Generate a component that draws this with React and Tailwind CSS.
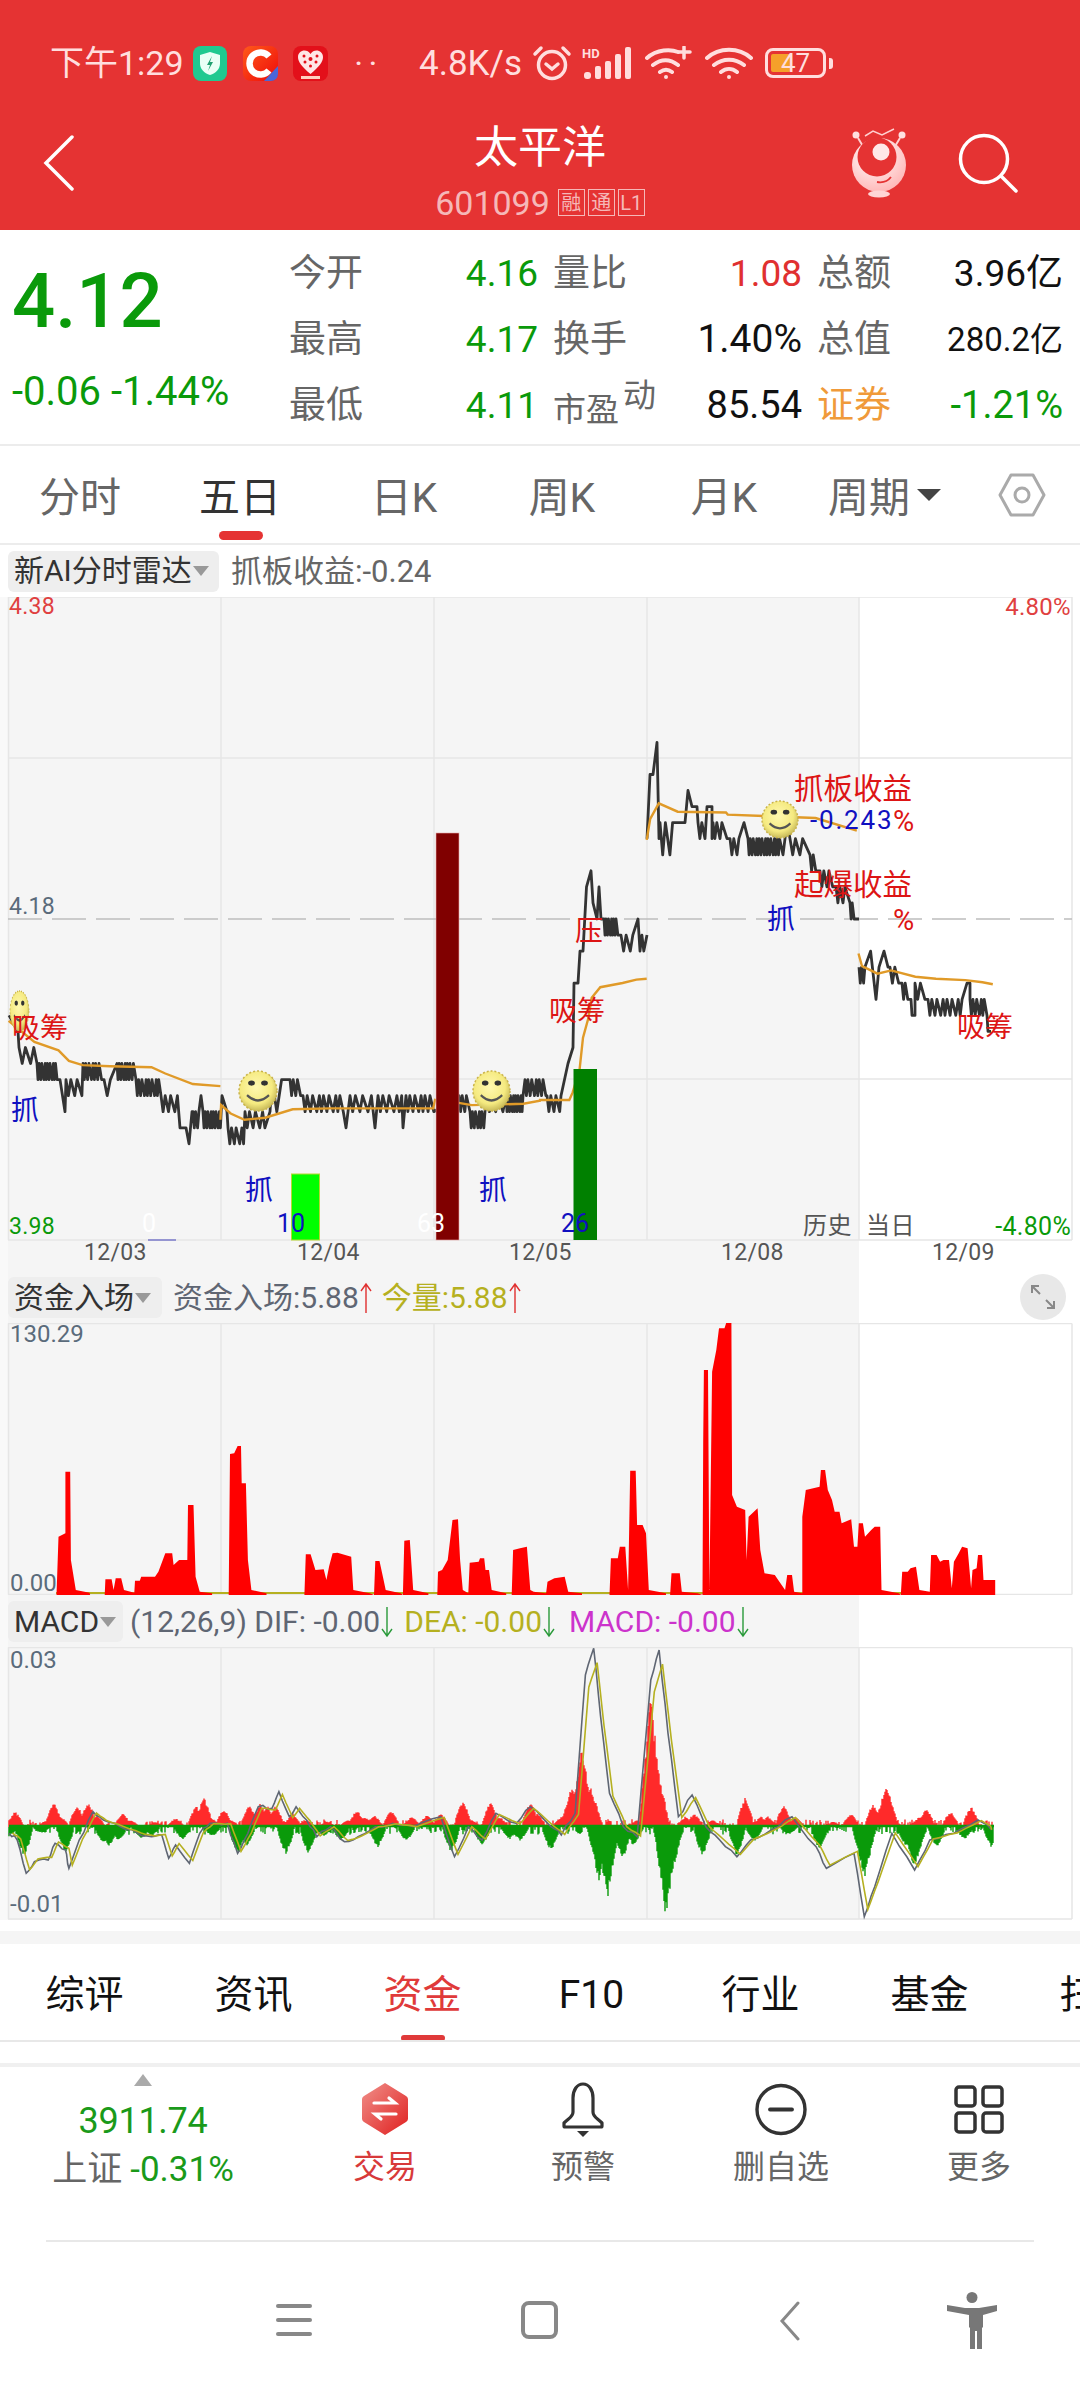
import React from "react";

const Y = (p) => 919 - (p - 4.18) * 1606;
const STEPS = [0.8, 0.8, 1.3, 0.8, 1.6, 1];
function zig(x0, x1, a, b, step) {
  const out = [];
  let x = x0, i = 0;
  while (x <= x1) {
    out.push([x, Y(i % 2 ? b : a)]);
    x += step * STEPS[i % 6];
    i++;
  }
  return out;
}
const pt = (x, p) => [[x, Y(p)]];
const join = (...a) => a.flat().map((q) => q.map((n) => n.toFixed(1)).join(",")).join(" ");

const day123 = join(
  pt(9, 4.12), pt(18, 4.11), zig(19, 36, 4.1, 4.09, 4), zig(37, 58, 4.09, 4.08, 1.3), pt(60, 4.08), pt(65, 4.06),
  zig(66, 82, 4.08, 4.07, 3), zig(83, 103, 4.09, 4.08, 1.6), zig(104, 115, 4.08, 4.07, 4), zig(117, 134, 4.09, 4.08, 1.3),
  zig(136, 160, 4.08, 4.07, 1.6), zig(161, 178, 4.07, 4.06, 2.6), pt(180, 4.05), pt(186, 4.05), pt(189, 4.04), pt(192, 4.06),
  zig(193, 200, 4.06, 4.05, 1.6), pt(201, 4.07), zig(203, 221, 4.06, 4.05, 1.3), pt(222, 4.07), pt(227, 4.06),
  zig(228, 244, 4.05, 4.04, 2.2), zig(245, 266, 4.06, 4.05, 2.8), pt(270, 4.06), zig(272, 288, 4.08, 4.06, 6), zig(290, 302, 4.08, 4.07, 2),
  zig(303, 345, 4.07, 4.06, 2.6), pt(346, 4.05), zig(350, 374, 4.07, 4.06, 3.4), pt(375, 4.05), zig(378, 402, 4.07, 4.06, 3), pt(403, 4.05),
  zig(406, 434, 4.07, 4.06, 2.4), zig(459, 468, 4.07, 4.06, 2), zig(470, 486, 4.06, 4.05, 1.5), zig(487, 505, 4.07, 4.06, 3), zig(506, 524, 4.07, 4.06, 1.2),
  zig(525, 547, 4.08, 4.07, 1.8), zig(547, 561, 4.07, 4.06, 2.4), pt(561, 4.07), pt(568, 4.09), pt(573, 4.1), pt(574, 4.14), pt(578, 4.14), pt(580, 4.16), pt(583, 4.16),
  pt(586.5, 4.2), pt(591, 4.21), pt(593, 4.19), pt(597, 4.18), pt(599, 4.2), pt(601, 4.18), zig(604, 619, 4.18, 4.17, 1.2), zig(621, 636, 4.17, 4.16, 3.2), pt(638, 4.18), zig(640, 647, 4.16, 4.17, 2.4)
);
const day4 = join(
  pt(647, 4.23), pt(650, 4.27), pt(653, 4.27), pt(657, 4.29), pt(659, 4.23), zig(660, 678, 4.24, 4.22, 3.4), pt(680, 4.24), pt(685, 4.24), pt(688, 4.26), pt(692, 4.25), pt(697, 4.25),
  zig(698, 706, 4.24, 4.23, 2.4), pt(707, 4.25), pt(712, 4.25), pt(712, 4.23), zig(713, 724, 4.24, 4.23, 2.4), pt(727, 4.23), zig(730, 740, 4.23, 4.22, 2.4), pt(744, 4.24),
  zig(748, 780, 4.23, 4.22, 1.4), pt(783, 4.22), pt(787, 4.24), pt(790, 4.23), zig(790, 808, 4.23, 4.22, 3.4), zig(810, 816, 4.22, 4.21, 2), zig(820, 833, 4.21, 4.2, 2.4), zig(836, 846, 4.2, 4.19, 2.4),
  zig(850, 855, 4.19, 4.18, 1.4), pt(859, 4.18)
);
const day5 = join(
  zig(859, 866, 4.15, 4.14, 1.6), pt(870.6, 4.16), pt(876, 4.13), pt(879, 4.15), pt(884, 4.16), pt(888, 4.15), zig(890, 900, 4.15, 4.14, 3), zig(902, 908, 4.14, 4.13, 2),
  pt(911, 4.13), pt(912, 4.12), pt(915, 4.12), zig(915, 925, 4.14, 4.13, 3.4), zig(928, 964, 4.13, 4.12, 2.4), pt(967, 4.14), pt(970, 4.14), zig(970, 985, 4.13, 4.12, 1.8), pt(987, 4.12), pt(988, 4.11), pt(991, 4.11)
);

const L = (a) => a.map(([x, y]) => `${(x / 2.904).toFixed(1)},${(600 + y / 2.376).toFixed(1)}`).join(" ");
const R = (a) => a.map(([x, y]) => `${(540 + x / 2.904).toFixed(1)},${(600 + y / 2.376).toFixed(1)}`).join(" ");
const avg = [
  L([[25, 1000], [100, 1050], [170, 1070], [200, 1095], [240, 1105], [320, 1108], [440, 1110], [480, 1125], [560, 1150], [640, 1155]]),
  L([[640, 1235], [642, 1200], [670, 1220], [710, 1235], [770, 1230], [850, 1210], [960, 1208], [1258, 1208], [1264, 1185]]),
  L([[1332, 1195], [1370, 1200], [1520, 1197], [1568, 1190]]) + " " + R([[0, 1188], [85, 1188], [95, 1170], [115, 1115], [125, 1040], [140, 995], [150, 945], [175, 920], [240, 910], [280, 902], [310, 900]]),
  R([[310, 570], [320, 520], [345, 483], [400, 503], [540, 505], [545, 510], [800, 518], [920, 548]]),
  R([[925, 840], [935, 870], [980, 888], [1020, 880], [1090, 895], [1150, 900], [1235, 903], [1285, 908], [1315, 913]]),
];

const fundPts = [[82,1005],[85,830],[95,820],[95,635],[102,635],[103,900],[110,990],[130,998],[131,1005],[152,1005],[153,958],[162,958],[165,990],[168,955],[176,955],[180,990],[195,998],[196,962],[203,962],[205,950],[225,950],[230,935],[240,880],[250,880],[252,915],[260,900],[272,900],[273,735],[281,735],[284,950],[290,995],[308,1000],[308,1005],[332,1005],[334,582],[340,580],[345,558],[350,558],[351,670],[357,670],[360,900],[365,990],[387,1000],[387,1005],[442,1005],[444,883],[451,883],[458,930],[470,928],[474,960],[478,918],[483,880],[490,878],[510,890],[513,990],[537,1000],[543,1005],[545,903],[551,903],[557,960],[560,990],[582,1000],[585,1005],[587,842],[595,840],[600,990],[622,1000],[622,1005],[635,1005],[636,935],[642,930],[650,900],[657,780],[665,778],[668,900],[672,990],[680,1000],[682,908],[695,905],[697,895],[703,895],[705,930],[710,930],[714,990],[735,1000],[735,1005],[743,1005],[745,870],[755,865],[765,860],[770,990],[775,995],[793,1000],[795,965],[805,955],[820,950],[825,995],[845,1000],[845,1005],[885,1005],[887,895],[897,895],[900,860],[908,860],[912,990],[915,632],[923,632],[925,795],[933,795],[938,820],[942,990],[967,1000],[967,1005],[973,1005],[975,940],[987,940],[990,995],[1013,1000],[1020,1005],[1021,545],[1022,330],[1028,330],[1030,990],[1034,335],[1040,270],[1044,205],[1052,205],[1055,185],[1062,185],[1063,705],[1070,740],[1082,750],[1084,900],[1087,770],[1100,745],[1104,870],[1110,940],[1125,945],[1130,960],[1140,990],[1143,945],[1150,945],[1153,995],[1165,1000],[1165,770],[1170,690],[1190,680],[1192,630],[1198,630],[1202,690],[1208,720],[1212,755],[1219,755],[1222,790],[1236,778],[1240,860],[1245,860],[1247,790],[1253,790],[1256,830],[1265,810],[1270,800],[1278,800],[1280,990],[1305,1000],[1308,1005],[1310,935],[1318,935],[1322,925],[1330,920],[1335,990],[1350,995],[1352,885],[1360,885],[1365,905],[1370,900],[1378,900],[1382,985],[1385,905],[1392,880],[1397,860],[1405,865],[1410,985],[1412,930],[1418,925],[1420,885],[1426,885],[1428,960],[1445,960],[1445,1005]];
const M = (x, y) => `${(x / 1.452).toFixed(1)},${(1260 + y / 3).toFixed(1)}`;
const fundPoly = fundPts.map(([x, y]) => M(x, y)).join(" ");

const redPk = [[22,635],[40,675],[68,660],[78,605],[88,650],[112,615],[128,605],[140,645],[178,640],[190,660],[225,665],[255,655],[285,615],[296,590],[305,650],[325,625],[335,660],[362,615],[378,610],[388,615],[400,615],[425,640],[445,660],[475,665],[505,660],[518,630],[530,650],[543,645],[568,632],[598,650],[620,645],[640,640],[672,600],[685,660],[712,605],[725,650],[770,605],[780,640],[815,650],[830,560],[845,435],[858,560],[862,640],[925,660],[945,265],[955,500],[960,640],[995,650],[1008,640],[1035,660],[1082,590],[1105,650],[1115,650],[1138,615],[1155,650],[1210,665],[1235,640],[1268,610],[1287,545],[1298,660],[1335,650],[1345,625],[1380,635],[1410,620]];
const greenPk = [[13,710],[35,770],[60,700],[95,760],[150,730],[158,745],[172,725],[205,720],[220,710],[265,720],[308,710],[345,765],[358,740],[415,765],[448,765],[470,710],[495,725],[548,745],[590,725],[655,760],[700,740],[740,720],[755,725],[800,755],[870,850],[882,900],[904,780],[920,740],[967,958],[975,830],[1020,770],[1070,770],[1095,725],[1145,705],[1190,750],[1255,840],[1315,740],[1328,810],[1360,745],[1400,720],[1440,745]];
const noise = (x) => { const s = Math.sin(x * 12.9898) * 43758.5453; return s - Math.floor(s); };
function hist(pk, sign) {
  let d = "";
  for (let X = 13; X <= 1443; X += 1.452) {
    let h = noise(X + sign) > 0.45 ? noise(X * 3) * 24 : 0;
    for (const [px, py] of pk) {
      const ph = Math.abs(py - 682);
      const big = ph > 120;
      const w = big ? 18 : 12;
      const t = 1 - Math.abs(X - px) / w;
      if (t > 0) h = Math.max(h, ph * Math.pow(t, big ? 1 : 0.6));
    }
    h *= 0.82 + 0.18 * noise(X);
    if (h > 0.5) d += `M${(X / 1.452).toFixed(1)} 1827V${(1827 + (sign * h) / 3).toFixed(1)}`;
  }
  return d;
}
const dif = [[13,700],[25,720],[38,820],[50,785],[70,780],[80,730],[95,750],[100,805],[115,720],[135,635],[150,660],[175,680],[200,700],[220,710],[235,705],[245,775],[255,735],[275,790],[290,700],[305,670],[330,670],[345,760],[360,700],[375,620],[395,625],[405,575],[420,650],[430,620],[445,660],[460,710],[480,680],[500,725],[520,710],[545,680],[570,670],[600,680],[640,650],[660,770],[680,680],[700,720],[720,640],[750,670],[770,620],[800,680],[815,705],[835,640],[850,225],[862,145],[872,350],[885,580],[905,680],[925,710],[945,240],[957,150],[970,400],[985,650],[1005,585],[1025,680],[1045,720],[1070,770],[1090,720],[1120,690],[1150,650],[1185,740],[1200,805],[1240,760],[1255,950],[1270,860],[1295,700],[1328,810],[1350,720],[1385,700],[1420,660],[1440,690]];
const MP = (x, y) => `${(x / 1.452).toFixed(1)},${(1600 + y / 3).toFixed(1)}`;
function rough(pts, amp) {
  const out = [];
  for (let i = 0; i < pts.length - 1; i++) {
    const [x0, y0] = pts[i], [x1, y1] = pts[i + 1];
    for (let k = 0; k < 3; k++) {
      const t = k / 3;
      const j = k === 0 ? 0 : (noise(x0 + k * 7) - 0.5) * amp;
      out.push([x0 + (x1 - x0) * t, y0 + (y1 - y0) * t + j]);
    }
  }
  out.push(pts[pts.length - 1]);
  return out;
}
const difLine = rough(dif, 12).map(([x, y]) => MP(x, y)).join(" ");
const deaLine = rough(dif, 4).map(([x, y]) => MP(Math.min(x + 5, 1440), 682 + (y - 682) * 0.92)).join(" ");

const greenT = "text-[#0a9a0a]";
const labelT = "text-[#666666]";

function Smiley({ x, y, w, h }) {
  const cx = x + w / 2, cy = y + h / 2;
  return (
    <g transform={`translate(${cx} ${cy}) scale(${w / 38} ${h / 38})`}>
      <circle r="19" fill="url(#smile)" stroke="#c9b24a" strokeWidth="1.5" strokeDasharray="2 2" />
      <ellipse cx="-6.5" cy="-7.5" rx="3.4" ry="2.4" fill="#333" />
      <ellipse cx="6.5" cy="-7.5" rx="3.4" ry="2.4" fill="#333" />
      <path d="M-11 4Q0 14 11 4" fill="none" stroke="#555" strokeWidth="2.2" />
    </g>
  );
}

function Grid({ top, bottom }) {
  return (
    <g stroke="#e6e6e6" strokeWidth="1.5">
      {[8.5, 221, 434, 647, 859, 1072].map((x) => (
        <line key={x} x1={x} x2={x} y1={top} y2={bottom} />
      ))}
      <line x1="8" x2="1072" y1={top} y2={top} />
      <line x1="8" x2="1072" y1={bottom} y2={bottom} />
    </g>
  );
}

function MainChart() {
  const t = "absolute whitespace-nowrap leading-none";
  const cn = `${t} text-[#dd1515]`;
  const blue = `${t} text-[28px] text-[#1010c0]`;
  const num = `${t} text-[25px]`;
  const ax = `${t} font-[Roboto] tracking-[0.3px]`;
  return (
    <div className="relative h-[663px] w-[1080px]">
      <svg className="block" width="1080" height="663" viewBox="0 597 1080 663">
        <defs>
          <radialGradient id="smile" cx="45%" cy="40%" r="60%">
            <stop offset="0%" stopColor="#fff8b0" />
            <stop offset="70%" stopColor="#f5ea80" />
            <stop offset="100%" stopColor="#c9bb5a" />
          </radialGradient>
        </defs>
        <Grid top={597} bottom={1240} />
        <g stroke="#e6e6e6" strokeWidth="1.5">
          <line x1="8" x2="1072" y1="758" y2="758" />
          <line x1="8" x2="1072" y1="1079" y2="1079" />
        </g>
        <line x1="8" x2="1072" y1="919" y2="919" stroke="#bdbdbd" strokeWidth="1.5" strokeDasharray="34 10" />
        <polyline points={day123} fill="none" stroke="#333333" strokeWidth="2.8" strokeLinejoin="round" />
        <polyline points={day4} fill="none" stroke="#333333" strokeWidth="2.8" strokeLinejoin="round" />
        <polyline points={day5} fill="none" stroke="#333333" strokeWidth="2.8" strokeLinejoin="round" />
        {avg.map((p, i) => (
          <polyline key={i} points={p} fill="none" stroke="#e09a28" strokeWidth="2.4" />
        ))}
        <rect x="436" y="833" width="23" height="407" fill="#800000" stroke="#e8a8a8" strokeWidth="0.6" />
        <rect x="291.5" y="1174" width="28" height="66" fill="#00ff00" stroke="#b8d830" strokeWidth="1" />
        <rect x="573.5" y="1069" width="23.5" height="171" fill="#008000" />
        <line x1="148" x2="176" y1="1240" y2="1240" stroke="#7878c8" strokeWidth="1.5" />
        <Smiley x={10} y={991} w={19} h={40} />
        <Smiley x={239} y={1071} w={38} h={40} />
        <Smiley x={473} y={1071} w={37} h={40} />
        <Smiley x={762} y={801} w={36} h={37} />
      </svg>
      <span className={`${ax} left-[9px] top-[-2px] text-[23px] text-[#e04040]`}>4.38</span>
      <span className={`${ax} right-[9px] top-[-2px] text-[24px] text-[#e04040]`}>4.80%</span>
      <span className={`${ax} left-[9px] top-[298px] text-[23px] text-[#5a6b7b]`}>4.18</span>
      <span className={`${ax} left-[9px] top-[618px] text-[23px] ${greenT}`}>3.98</span>
      <span className={`${ax} right-[9px] top-[617px] text-[25px] ${greenT}`}>-4.80%</span>
      <span className={`${cn} left-[12px] top-[418px] text-[28px]`}>吸筹</span>
      <span className={`${blue} left-[11px] top-[500px]`}>抓</span>
      <span className={`${blue} left-[245px] top-[580px]`}>抓</span>
      <span className={`${blue} left-[479px] top-[580px]`}>抓</span>
      <span className={`${num} left-[142px] top-[614px] text-white`}>0</span>
      <span className={`${num} left-[277px] top-[614px] text-[#1010c0]`}>10</span>
      <span className={`${num} left-[417px] top-[614px] text-white`}>63</span>
      <span className={`${num} left-[561px] top-[614px] text-[#1010c0]`}>26</span>
      <span className={`${cn} left-[575px] top-[321px] text-[28px]`}>压</span>
      <span className={`${cn} left-[549px] top-[401px] text-[28px]`}>吸筹</span>
      <span className={`${cn} left-[957px] top-[417px] text-[28px]`}>吸筹</span>
      <span className={`${cn} left-[794px] top-[178px] text-[29.5px]`}>抓板收益</span>
      <span className={`${t} left-[810px] top-[210px] text-[26px] tracking-[1.8px] text-[#1010c0]`}>-0.243</span>
      <span className={`${cn} left-[893px] top-[210px] font-[Roboto] text-[29px]`}>%</span>
      <span className={`${cn} left-[794px] top-[274px] text-[29.5px]`}>起爆收益</span>
      <span className={`${cn} left-[893px] top-[309px] font-[Roboto] text-[29px]`}>%</span>
      <span className={`${blue} left-[767px] top-[309px]`}>抓</span>
      <span className={`${t} left-[803px] top-[617px] text-[24px] tracking-[0.5px] text-[#555555]`}>历史</span>
      <span className={`${t} left-[866px] top-[617px] text-[24px] tracking-[0.5px] text-[#555555]`}>当日</span>
      <span className={`${ax} left-[84px] top-[644px] text-[23px] text-[#555555]`}>12/03</span>
      <span className={`${ax} left-[297px] top-[644px] text-[23px] text-[#555555]`}>12/04</span>
      <span className={`${ax} left-[509px] top-[644px] text-[23px] text-[#555555]`}>12/05</span>
      <span className={`${ax} left-[721px] top-[644px] text-[23px] text-[#555555]`}>12/08</span>
      <span className={`${ax} left-[932px] top-[644px] text-[23px] text-[#555555]`}>12/09</span>
    </div>
  );
}

const Caret = ({ c = "text-[#999999]" }) => (
  <svg className={`ml-[1px] ${c}`} width="16" height="12" viewBox="0 0 16 12"><path d="M0 1h16L8 11z" fill="currentColor" /></svg>
);
const ArrowUp = () => (
  <svg width="12" height="32" viewBox="0 0 12 32" className="mx-[1px] text-[#e03030]"><path d="M6 31V2M1 9l5-7 5 7" fill="none" stroke="currentColor" strokeWidth="1.4" /></svg>
);
const ArrowDown = () => (
  <svg width="12" height="32" viewBox="0 0 12 32" className="mx-[1px] text-[#2a9a3a]"><path d="M6 1v29M1 23l5 7 5-7" fill="none" stroke="currentColor" strokeWidth="1.4" /></svg>
);

function FundChart() {
  return (
    <div className="relative h-[272px] w-[1080px]">
      <svg className="block" width="1080" height="272" viewBox="0 1323 1080 272">
        <Grid top={1323.5} bottom={1594.5} />
        <line x1="56" x2="995" y1="1593" y2="1593" stroke="#b5b020" strokeWidth="2" />
        <polygon points={fundPoly} fill="#ff0000" />
      </svg>
      <span className="absolute left-[10px] top-[-1px] font-[Roboto] text-[24px] leading-none text-[#5a6b7b]">130.29</span>
      <span className="absolute left-[10px] top-[248px] font-[Roboto] text-[24px] leading-none text-[#5a6b7b]">0.00</span>
    </div>
  );
}

function MacdChart() {
  return (
    <div className="relative h-[273px] w-[1080px]">
      <svg className="block" width="1080" height="273" viewBox="0 1647 1080 273">
        <Grid top={1647.5} bottom={1919} />
        <path d={hist(redPk, -1)} stroke="#ff2a2a" strokeWidth="1.4" fill="none" />
        <path d={hist(greenPk, 1)} stroke="#0a9a0a" strokeWidth="1.4" fill="none" />
        <line x1="9" x2="994" y1="1826" y2="1826" stroke="#0a9a0a" strokeWidth="2.5" />
        <polyline points={difLine} fill="none" stroke="#5f6673" strokeWidth="1.6" />
        <polyline points={deaLine} fill="none" stroke="#b5b020" strokeWidth="1.6" />
      </svg>
      <span className="absolute left-[10px] top-[1px] font-[Roboto] text-[24px] leading-none text-[#5a6b7b]">0.03</span>
      <span className="absolute left-[10px] top-[245px] font-[Roboto] text-[24px] leading-none text-[#5a6b7b]">-0.01</span>
    </div>
  );
}

function StatusBar() {
  const c = "#ffdede";
  return (
    <div className="flex h-[108px] items-center pl-[50px] pt-[18px] text-[#ffdede]">
      <span className="w-[143px] whitespace-nowrap text-[34px] leading-none">下午1:29</span>
      <svg width="34" height="35" viewBox="0 0 34 35">
        <rect width="34" height="35" rx="8" fill="#20c990" />
        <path d="M17 6l10 3v8c0 6-4 10-10 12C11 27 7 23 7 17V9z" fill="#eafff6" />
        <path d="M19 10l-5 9h3l-2 6 5-9h-3z" fill="#20a070" />
      </svg>
      <svg className="ml-[16px]" width="35" height="35" viewBox="0 0 35 35">
        <defs><linearGradient id="cg" x1="0" y1="0" x2="1" y2="1"><stop offset="0" stopColor="#ff5a1a" /><stop offset="1" stopColor="#ee0a0a" /></linearGradient></defs>
        <rect width="35" height="35" rx="8" fill="url(#cg)" />
        <path d="M26 10.5A11 11 0 1 0 26 24.5" fill="none" stroke="#fff" strokeWidth="6.5" />
        <path d="M35 20v8a7 7 0 0 1-7 7h-7z" fill="#4a66d8" />
      </svg>
      <svg className="ml-[15px]" width="35" height="35" viewBox="0 0 35 35">
        <rect width="35" height="35" rx="8" fill="#e3101a" />
        <path d="M17.5 28C9 21 5 16 5 11c0-7 9-9 12.5-3C21 2 30 4 30 11c0 5-4 10-12.5 17z" fill="#ffe6e6" />
        <g fill="#e3101a">
          <circle cx="11" cy="10" r="1.5" /><circle cx="17.5" cy="13" r="2" /><circle cx="24" cy="10" r="1.5" /><circle cx="12" cy="16" r="1.5" /><circle cx="23" cy="16" r="1.5" /><circle cx="17.5" cy="20" r="1.5" />
        </g>
        <rect x="8" y="30" width="19" height="3" fill="#ffd0c0" />
      </svg>
      <span className="ml-[27px] w-[36px] text-[24px] font-bold leading-none tracking-[7px]">··</span>
      <span className="ml-[28px] w-[113px] whitespace-nowrap text-[35px] leading-none">4.8K/s</span>
      <svg width="40" height="38" viewBox="0 0 40 38" fill="none" stroke={c} strokeWidth="3.5" strokeLinecap="round">
        <circle cx="20" cy="21" r="13.5" />
        <path d="M14 20l6 5 6-5" />
        <path d="M3 10l6-6M37 10l-6-6" />
      </svg>
      <svg className="ml-[10px]" width="52" height="34" viewBox="0 0 52 34" fill={c}>
        <text x="0" y="12" fontSize="13" fontWeight="700" fontFamily="Roboto" fill={c}>HD</text>
        <rect x="2" y="26" width="7" height="7" rx="3" />
        <rect x="13" y="20" width="6" height="13" rx="2" />
        <rect x="23" y="15" width="6" height="18" rx="2" />
        <rect x="33" y="8" width="6" height="25" rx="2" />
        <rect x="43" y="1" width="6" height="32" rx="2" />
      </svg>
      <svg className="ml-[11px]" width="50" height="34" viewBox="0 0 50 34" fill="none" stroke={c} strokeWidth="4" strokeLinecap="round">
        <path d="M2 12C12 3 26 3 33 6M8 19c8-6 17-6 25 0M15 26c4-3 8-3 12 0" />
        <path d="M39 1v11M34 6h11" strokeWidth="3.5" />
        <circle cx="21" cy="31" r="2" fill={c} stroke="none" />
      </svg>
      <svg className="ml-[10px]" width="48" height="34" viewBox="0 0 48 34" fill="none" stroke={c} strokeWidth="4" strokeLinecap="round">
        <path d="M2 12c12-11 32-11 44 0M9 19c9-7 21-7 30 0M16 26c5-4 11-4 16 0" />
        <circle cx="24" cy="31" r="2" fill={c} stroke="none" />
      </svg>
      <div className="relative ml-[12px] h-[30px] w-[61px] rounded-[8px] border-[3px] border-[#ffdede]">
        <span className="absolute left-[3px] top-[3px] h-[18px] w-[20px] rounded-[2px] bg-[#f5a02a]" />
        <span className="absolute left-[13px] top-[0px] font-[Roboto] text-[26px] leading-[24px]">47</span>
      </div>
      <span className="ml-[3px] h-[11px] w-[4px] rounded-r-[3px] bg-[#ffdede]" />
    </div>
  );
}

function Header() {
  return (
    <div className="relative h-[122px]">
      <svg className="absolute left-[43px] top-[27px]" width="32" height="56" viewBox="0 0 32 56" fill="none" stroke="#fff" strokeWidth="3.5" strokeLinecap="round">
        <path d="M29 2L3 28l26 26" />
      </svg>
      <div className="flex flex-col items-center pt-[18px]">
        <div className="text-[44px] leading-[44px] text-white">太平洋</div>
        <div className="mt-[19px] flex h-[27px] items-center text-[#f5b8b8]">
          <span className="text-[34px] leading-none">601099</span>
          <span className="ml-[8px] flex h-[27px] w-[27px] items-center justify-center border border-[#f5b8b8] text-[20px] leading-none">融</span>
          <span className="ml-[3px] flex h-[27px] w-[27px] items-center justify-center border border-[#f5b8b8] text-[20px] leading-none">通</span>
          <span className="ml-[3px] flex h-[27px] w-[27px] items-center justify-center border border-[#f5b8b8] text-[20px] leading-none">L1</span>
        </div>
      </div>
      <svg className="absolute left-[850px] top-[20px]" width="58" height="70" viewBox="0 0 58 70">
        <defs>
          <radialGradient id="rb" cx="40%" cy="30%" r="80%"><stop offset="0" stopColor="#fff" /><stop offset="1" stopColor="#ffb0b0" /></radialGradient>
        </defs>
        <path d="M8 10l6 10M50 10l-6 10" stroke="#ffd0d0" strokeWidth="2" />
        <circle cx="6" cy="7" r="3.5" fill="#ffe0e0" />
        <circle cx="52" cy="7" r="3.5" fill="#ffe0e0" />
        <path d="M15 8l8-5 9 4 12-6" stroke="#ffd0d0" strokeWidth="1.5" fill="none" />
        <circle cx="29" cy="37" r="27" fill="url(#rb)" />
        <circle cx="27" cy="29" r="19.5" fill="#e53333" />
        <circle cx="31" cy="24" r="8.5" fill="#ffe8e8" />
        <path d="M27 54c6 1 11-1 14-5" fill="none" stroke="#e53333" strokeWidth="1.8" />
        <ellipse cx="29" cy="66" rx="11" ry="3.5" fill="#ffd5d5" />
      </svg>
      <svg className="absolute left-[956px] top-[24px]" width="62" height="62" viewBox="0 0 62 62" fill="none" stroke="#fff" strokeWidth="3.5" strokeLinecap="round">
        <circle cx="28" cy="27" r="23.5" />
        <path d="M45 44l15 15" />
      </svg>
    </div>
  );
}

function Stat({ label, value, valueC = greenT, size = "text-[37px]", w, labelC = labelT, lc }) {
  return (
    <div className={`flex items-center justify-between ${w}`}>
      {lc || <span className={`text-[37px] leading-none ${labelC}`}>{label}</span>}
      <span className={`whitespace-nowrap leading-none ${size} ${valueC}`}>{value}</span>
    </div>
  );
}

function Quote() {
  const a = "w-[249px]", b = "w-[249px]", c = "w-[246px]";
  const black = "text-[#111111]";
  return (
    <div className="flex h-[216px] border-b-2 border-[#ececec]">
      <div className="w-[289px] pl-[12px]">
        <div className={`mt-[33px] text-[76px] font-medium leading-none ${greenT}`}>4.12</div>
        <div className={`mt-[33px] whitespace-nowrap text-[40px] leading-none ${greenT}`}>-0.06 -1.44%</div>
      </div>
      <div className="flex flex-col pt-[10px]">
        <div className="flex h-[66px] gap-[15px]">
          <Stat label="今开" value="4.16" w={a} />
          <Stat label="量比" value="1.08" valueC="text-[#e03030]" w={b} />
          <Stat label="总额" value="3.96亿" valueC={black} w={c} />
        </div>
        <div className="flex h-[66px] gap-[15px]">
          <Stat label="最高" value="4.17" w={a} />
          <Stat label="换手" value="1.40%" size="text-[39px]" valueC={black} w={b} />
          <Stat label="总值" value="280.2亿" size="text-[33px]" valueC={black} w={c} />
        </div>
        <div className="flex h-[66px] gap-[15px]">
          <Stat label="最低" value="4.11" w={a} />
          <Stat
            value="85.54"
            size="text-[38px]"
            valueC={black}
            w={b}
            lc={
              <span className={`relative whitespace-nowrap pt-[8px] text-[33px] leading-none ${labelT}`}>
                市盈
                <span className="absolute left-[70px] top-[-6px] text-[33px]">动</span>
              </span>
            }
          />
          <Stat label="证券" value="-1.21%" size="text-[38px]" labelC="text-[#f09a3a]" w={c} />
        </div>
      </div>
    </div>
  );
}

function ChartTabs() {
  const tab = "flex items-center justify-center text-[41px] leading-none";
  const gray = "text-[#666666]";
  return (
    <div className="relative flex h-[99px] items-center border-b-2 border-[#ececec] pt-[8px]">
      <div className={`${tab} ${gray} w-[160px]`}>分时</div>
      <div className={`${tab} w-[160px] text-[#333333]`}>五日</div>
      <div className={`${tab} ${gray} w-[168px]`}>日K</div>
      <div className={`${tab} ${gray} w-[148px]`}>周K</div>
      <div className={`${tab} ${gray} w-[176px]`}>月K</div>
      <div className={`${tab} ${gray} ml-[16px]`}>周期</div>
      <svg className="ml-[7px] mb-[8px]" width="24" height="12" viewBox="0 0 24 12"><path d="M0 0h24L12 12z" fill="#444444" /></svg>
      <svg className="absolute left-[998px] top-[27px]" width="48" height="44" viewBox="0 0 48 44" fill="none" stroke="#aaaaaa" strokeWidth="3">
        <path d="M13 2h22l11 20-11 20H13L2 22z" strokeLinejoin="round" />
        <circle cx="24" cy="22" r="7" />
      </svg>
      <span className="absolute left-[219px] top-[85px] h-[9px] w-[44px] rounded-full bg-[#e53333]" />
    </div>
  );
}

function Dropdown({ w, children }) {
  return (
    <div className={`flex h-[41px] items-center rounded-[6px] bg-[#eeeeee] pl-[6px] text-[#333333] ${w}`}>
      <span className="whitespace-nowrap text-[30px] leading-none">{children}</span>
      <Caret />
    </div>
  );
}

function IndicatorRow() {
  return (
    <div className="flex h-[52px] items-center gap-[12px] pl-[8px]">
      <Dropdown w="w-[211px]">新AI分时雷达</Dropdown>
      <span className="text-[31px] leading-none text-[#666666]">抓板收益:-0.24</span>
    </div>
  );
}

function ChartArea() {
  return (
    <div className="bg-[linear-gradient(to_right,#f9f9f9_8px,#f5f5f5_8px,#f5f5f5_859px,#ffffff_859px)]">
      <MainChart />
      <div className="relative flex h-[63px] items-start gap-[11px] pl-[8px] pt-[17px]">
        <Dropdown w="w-[154px]">资金入场</Dropdown>
        <div className="flex h-[41px] items-center whitespace-nowrap text-[30px] leading-none text-[#5f6673]">
          资金入场:5.88<ArrowUp />
          <span className="ml-[9px] text-[#b5b020]">今量:5.88</span><ArrowUp />
        </div>
        <div className="absolute left-[1020px] top-[14px] flex h-[46px] w-[46px] items-center justify-center rounded-full bg-[#e8e8e8]">
          <svg width="26" height="26" viewBox="0 0 26 26" fill="none" stroke="#888888" strokeWidth="2">
            <path d="M2 9V2h7M2 2l8 8M24 17v7h-7M24 24l-8-8" />
          </svg>
        </div>
      </div>
      <FundChart />
      <div className="flex h-[52px] items-start gap-[7px] pl-[8px] pt-[6px]">
        <Dropdown w="w-[115px]">MACD</Dropdown>
        <div className="flex h-[41px] items-center whitespace-nowrap text-[30px] leading-none text-[#5f6673]">
          (12,26,9) DIF: -0.00<ArrowDown />
          <span className="ml-[10px] text-[#b5b020]">DEA: -0.00</span><ArrowDown />
          <span className="ml-[13px] text-[#cc33cc]">MACD: -0.00</span><ArrowDown />
        </div>
      </div>
      <MacdChart />
    </div>
  );
}

function ContentTabs() {
  const items = ["综评", "资讯", "资金", "F10", "行业", "基金", "扫雷"];
  return (
    <div className="relative h-[98px] overflow-hidden border-b-2 border-[#e8e8e8]">
      <div className="flex h-full w-[1200px] items-center pt-[6px]">
        {items.map((s) => (
          <div key={s} className={`flex w-[169px] shrink-0 justify-center text-[39px] leading-none ${s === "资金" ? "text-[#e03a3a]" : "text-[#111111]"}`}>{s}</div>
        ))}
      </div>
      <span className="absolute bottom-[-2px] left-[338px] h-[2px] w-[168px] bg-white" />
      <span className="absolute bottom-[-1px] left-[401px] h-[6px] w-[44px] rounded-full bg-[#e03a3a]" />
    </div>
  );
}

function NavItem({ icon, label, c = "text-[#666666]" }) {
  return (
    <div className="flex w-[198px] flex-col items-center">
      <div className="flex h-[56px] items-center justify-center">{icon}</div>
      <div className={`mt-[14px] whitespace-nowrap text-[32px] leading-none ${c}`}>{label}</div>
    </div>
  );
}

function BottomBar() {
  return (
    <div className="flex h-[177px] border-t-[4px] border-[#f0f0f0]">
      <div className="relative flex w-[286px] flex-col items-center pt-[36px]">
        <svg className="absolute left-[134px] top-[7px]" width="18" height="12" viewBox="0 0 18 12"><path d="M9 0l9 12H0z" fill="#aaaaaa" /></svg>
        <div className="text-[36px] leading-none text-[#1a9a1a] tracking-[-0.3px]">3911.74</div>
        <div className="mt-[13px] flex items-center whitespace-nowrap text-[35px] leading-none">
          <span className="text-[#666666]">上证</span>
          <span className="ml-[8px] text-[#1a9a1a]">-0.31%</span>
        </div>
      </div>
      <div className="flex pt-[14px]">
        <NavItem
          label="交易"
          c="text-[#d83a3a]"
          icon={
            <svg width="48" height="54" viewBox="0 0 48 54">
              <defs><linearGradient id="tr" x1="0" y1="0" x2="1" y2="1"><stop offset="0" stopColor="#f0908a" /><stop offset="1" stopColor="#e01f1f" /></linearGradient></defs>
              <path d="M24 1l21 13a4 4 0 0 1 2 3v20a4 4 0 0 1-2 3L24 53 3 40a4 4 0 0 1-2-3V17a4 4 0 0 1 2-3z" fill="url(#tr)" />
              <path d="M13 21h21l-6-5M35 32H14l6 5" fill="none" stroke="#fff" strokeWidth="3.2" strokeLinecap="round" />
            </svg>
          }
        />
        <NavItem
          label="预警"
          icon={
            <svg width="46" height="55" viewBox="0 0 46 55" fill="none" stroke="#333333" strokeWidth="3.2" strokeLinejoin="round">
              <path d="M23 2c-6 0-10 6-10 14v14c0 5-4 6-9 11v3a1 1 0 0 0 1 1h36a1 1 0 0 0 1-1v-3c-5-5-9-6-9-11V16c0-8-4-14-10-14z" />
              <path d="M17 49h12l-6 6z" fill="#333333" stroke="none" />
            </svg>
          }
        />
        <NavItem
          label="删自选"
          icon={
            <svg width="52" height="53" viewBox="0 0 52 53" fill="none" stroke="#333333" strokeWidth="3.4">
              <circle cx="26" cy="26.5" r="24" />
              <path d="M15 26.5h22" strokeWidth="3.8" strokeLinecap="round" />
            </svg>
          }
        />
        <NavItem
          label="更多"
          icon={
            <svg width="50" height="49" viewBox="0 0 50 49" fill="none" stroke="#333333" strokeWidth="3.5">
              <rect x="2" y="2" width="19" height="19" rx="3" />
              <rect x="29" y="2" width="19" height="19" rx="3" />
              <rect x="2" y="28" width="19" height="19" rx="3" />
              <rect x="29" y="28" width="19" height="19" rx="3" />
            </svg>
          }
        />
      </div>
    </div>
  );
}

function SystemNav() {
  return (
    <div className="h-[156px]">
      <div className="mx-[46px] h-[2px] bg-[#e8e8e8]" />
      <div className="relative h-[154px]">
        <svg className="absolute left-[276px] top-[62px]" width="36" height="32" viewBox="0 0 36 32" fill="#888888">
          <rect y="0" width="36" height="4" rx="2" />
          <rect y="14" width="36" height="4" rx="2" />
          <rect y="28" width="36" height="4" rx="2" />
        </svg>
        <svg className="absolute left-[521px] top-[59px]" width="37" height="38" viewBox="0 0 37 38" fill="none" stroke="#888888" strokeWidth="4">
          <rect x="2" y="2" width="33" height="34" rx="6" />
        </svg>
        <svg className="absolute left-[778px] top-[59px]" width="24" height="40" viewBox="0 0 24 40" fill="none" stroke="#888888" strokeWidth="3" strokeLinecap="round">
          <path d="M20 2L4 20l16 18" />
        </svg>
        <svg className="absolute left-[947px] top-[50px]" width="50" height="57" viewBox="0 0 50 57" fill="#777777">
          <circle cx="25" cy="5.5" r="5.5" />
          <path d="M0 13l18 3h14l18-3v6l-14 4v12l-1 1v21h-5V39h-2v18h-5V36l-1-1V23L0 19z" />
        </svg>
      </div>
    </div>
  );
}

export default function App() {
  return (
    <div className="h-[2400px] w-[1080px] overflow-hidden bg-white font-['Roboto','Noto_Sans_CJK_SC',sans-serif]">
      <div className="h-[230px] bg-[#e53333]">
        <StatusBar />
        <Header />
      </div>
      <Quote />
      <ChartTabs />
      <IndicatorRow />
      <ChartArea />
      <div className="mt-[11px] h-[13px] bg-[#f5f5f5]" />
      <ContentTabs />
      <div className="h-[21px]" />
      <BottomBar />
      <SystemNav />
    </div>
  );
}
